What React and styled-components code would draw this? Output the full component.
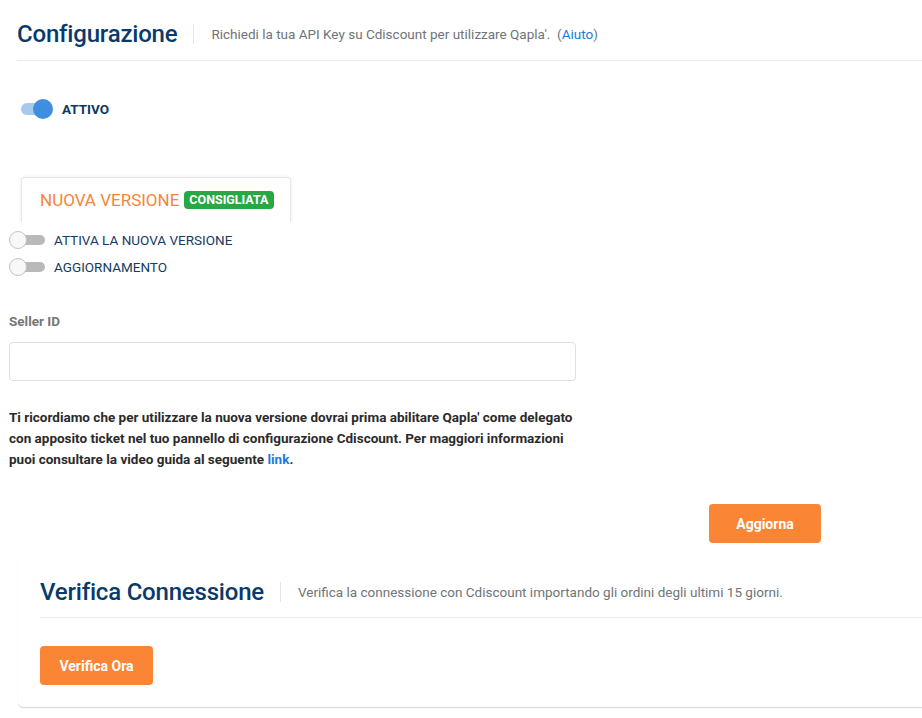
import React, { useState } from "react";
import styled, { createGlobalStyle } from "styled-components";

const GlobalStyle = createGlobalStyle`
  body {
    margin: 0;
    background: #ffffff;
    font-family: Roboto, "Liberation Sans", sans-serif;
  }
`;

const Page = styled.div`
  padding: 0 0 10px 9px;
  width: 922px;
  box-sizing: border-box;
  overflow: hidden;
`;

// header con titolo, divisore verticale e sottotitolo
const Header = styled.div`
  display: flex;
  align-items: center;
  height: ${(p) => p.h || 61}px;
  margin-left: ${(p) => p.indent ?? 8}px;
  border-bottom: 1px solid #e9ecf0;
  box-sizing: border-box;
  padding-top: ${(p) => p.pt || 7}px;
`;

const Title = styled.h1`
  margin: 0;
  font-size: 24px;
  font-weight: 500;
  color: #093a6b;
  letter-spacing: -0.2px;
`;

const VDivider = styled.span`
  width: 1px;
  height: 20px;
  background: #e2e5ea;
  margin: 0 17px 0 16px;
`;

const Subtitle = styled.span`
  font-size: 13.5px;
  color: #707478;
`;

const Link = styled.a`
  color: #1a7ae0;
  text-decoration: none;
  font-weight: ${(p) => (p.bold ? 700 : "inherit")};
`;

const ToggleRow = styled.label`
  display: flex;
  align-items: center;
  gap: ${(p) => p.gap || 9}px;
  margin: ${(p) => p.margin || "0"};
  cursor: pointer;
`;

const BigTrack = styled.span`
  position: relative;
  width: 31px;
  height: 12px;
  border-radius: 6px;
  background: #a8c9ee;
`;

const BigThumb = styled.span`
  position: absolute;
  top: -4px;
  left: 12px;
  width: 20px;
  height: 20px;
  border-radius: 50%;
  background: #3f8ee0;
`;

const ActiveLabel = styled.span`
  font-size: 13.5px;
  font-weight: 700;
  color: #0d3863;
`;

const Tab = styled.div`
  width: 270px;
  height: 45px;
  margin: 60px 0 0 12px;
  box-sizing: border-box;
  border: 1px solid #e3e6ea;
  border-bottom: none;
  border-radius: 4px 4px 0 0;
  box-shadow: 0 0 4px rgba(0, 0, 0, 0.08);
  clip-path: inset(-6px -6px 0 -6px);
  display: flex;
  align-items: center;
  padding: 0 0 0 18px;
  gap: 5px;
`;

const TabText = styled.span`
  font-size: 17px;
  color: #f5843c;
`;

const Badge = styled.span`
  background: #28a745;
  color: #ffffff;
  font-size: 12.5px;
  font-weight: 700;
  padding: 2px 5px;
  border-radius: 4px;
  line-height: 14px;
`;

const SwitchList = styled.div`
  display: flex;
  flex-direction: column;
  gap: 11px;
  margin-top: 10px;
`;

const SmallTrack = styled.span`
  position: relative;
  width: 36px;
  height: 16px;
  flex: none;
`;

const SmallBar = styled.span`
  position: absolute;
  left: 8px;
  right: 0;
  top: 3px;
  height: 10px;
  border-radius: 5px;
  background: #b9b9b9;
`;

const SmallThumb = styled.span`
  position: absolute;
  left: 0;
  top: -1px;
  width: 16px;
  height: 16px;
  border-radius: 50%;
  background: #f7f8fa;
  border: 1px solid #c4c4c4;
`;

const SwitchLabel = styled.span`
  font-size: 13.5px;
  color: #163a63;
`;

const FieldLabel = styled.div`
  margin-top: 38px;
  font-size: 13.5px;
  font-weight: 700;
  color: #767676;
`;

const Input = styled.input`
  display: block;
  margin-top: 13px;
  width: 567px;
  height: 39px;
  box-sizing: border-box;
  border: 1px solid #dcdfe3;
  border-radius: 4px;
  outline: none;
  padding: 0 10px;
  font-family: inherit;
`;

const Note = styled.p`
  margin: 26px 0 0;
  width: 572px;
  font-size: 13.5px;
  font-weight: 700;
  line-height: 21px;
  color: #2b2b2b;
`;

const Actions = styled.div`
  display: flex;
  justify-content: flex-end;
  width: 812px;
  margin-top: 34px;
`;

const Button = styled.button`
  background: #f98535;
  color: #ffffff;
  border: none;
  border-radius: 4px;
  height: 39px;
  width: ${(p) => p.w}px;
  font-family: inherit;
  font-size: 14px;
  font-weight: 700;
  cursor: pointer;
`;

const Card = styled.div`
  margin: 13px 0 0 9px;
  padding: 0 0 22px 22px;
  border-radius: 0 0 0 5px;
  box-shadow: 0 1px 1px rgba(40, 60, 90, 0.22);
`;

const CardBody = styled.div`
  padding-top: 28px;
`;

export default function App() {
  const [active, setActive] = useState(true);

  return (
    <Page>
      <GlobalStyle />
      <Header>
        <Title>Configurazione</Title>
        <VDivider />
        <Subtitle>
          Richiedi la tua API Key su Cdiscount per utilizzare Qapla'.&nbsp; (<Link href="#">Aiuto</Link>)
        </Subtitle>
      </Header>

      <ToggleRow gap={10} margin="40px 0 0 12px" onClick={() => setActive(!active)}>
        <BigTrack>
          <BigThumb />
        </BigTrack>
        <ActiveLabel>ATTIVO</ActiveLabel>
      </ToggleRow>

      <Tab>
        <TabText>NUOVA VERSIONE</TabText>
        <Badge>CONSIGLIATA</Badge>
      </Tab>

      <SwitchList>
        <ToggleRow>
          <SmallTrack>
            <SmallBar />
            <SmallThumb />
          </SmallTrack>
          <SwitchLabel>ATTIVA LA NUOVA VERSIONE</SwitchLabel>
        </ToggleRow>
        <ToggleRow>
          <SmallTrack>
            <SmallBar />
            <SmallThumb />
          </SmallTrack>
          <SwitchLabel>AGGIORNAMENTO</SwitchLabel>
        </ToggleRow>
      </SwitchList>

      <FieldLabel>Seller ID</FieldLabel>
      <Input type="text" />

      <Note>
        Ti ricordiamo che per utilizzare la nuova versione dovrai prima abilitare Qapla' come delegato con
        apposito ticket nel tuo pannello di configurazione Cdiscount. Per maggiori informazioni puoi consultare
        la video guida al seguente <Link href="#" bold>link</Link>.
      </Note>

      <Actions>
        <Button w={112}>Aggiorna</Button>
      </Actions>

      <Card>
        <Header indent={0} h={62} pt={10}>
          <Title>Verifica Connessione</Title>
          <VDivider />
          <Subtitle>Verifica la connessione con Cdiscount importando gli ordini degli ultimi 15 giorni.</Subtitle>
        </Header>
        <CardBody>
          <Button w={113}>Verifica Ora</Button>
        </CardBody>
      </Card>
    </Page>
  );
}
